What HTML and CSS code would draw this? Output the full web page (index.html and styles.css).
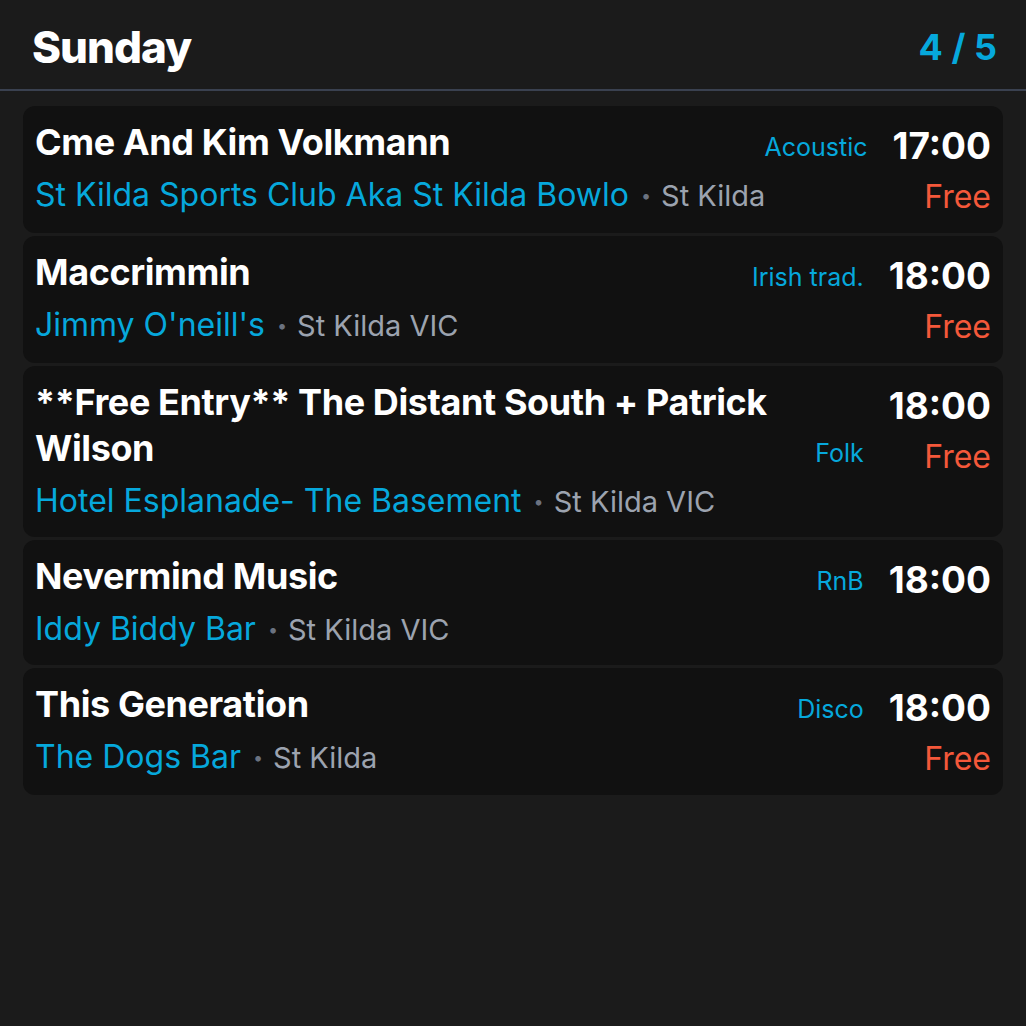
FILE: index.html
```html
<!DOCTYPE html>
<html lang="en">
<head>
<meta charset="utf-8">
<title>Sunday</title>
<link rel="stylesheet" href="styles.css">
</head>
<body>
<div class="screen">
  <header class="header">
    <h1 class="day">Sunday</h1>
    <div class="pager">4 / 5</div>
  </header>
  <main class="list">
    <article class="card">
      <div class="main">
        <div class="top">
          <div class="title">Cme And Kim Volkmann</div>
          <div class="genre">Acoustic</div>
        </div>
        <div class="venue"><span class="venue-name">St Kilda Sports Club Aka St Kilda Bowlo</span><span class="dot">•</span><span class="place">St Kilda</span></div>
      </div>
      <div class="side">
        <div class="time">17:00</div>
        <div class="price">Free</div>
      </div>
    </article>
    <article class="card">
      <div class="main">
        <div class="top">
          <div class="title">Maccrimmin</div>
          <div class="genre">Irish trad.</div>
        </div>
        <div class="venue"><span class="venue-name">Jimmy O'neill's</span><span class="dot">•</span><span class="place">St Kilda VIC</span></div>
      </div>
      <div class="side">
        <div class="time">18:00</div>
        <div class="price">Free</div>
      </div>
    </article>
    <article class="card">
      <div class="main">
        <div class="top">
          <div class="title">**Free Entry** The Distant South + Patrick Wilson</div>
          <div class="genre">Folk</div>
        </div>
        <div class="venue"><span class="venue-name">Hotel Esplanade- The Basement</span><span class="dot">•</span><span class="place">St Kilda VIC</span></div>
      </div>
      <div class="side">
        <div class="time">18:00</div>
        <div class="price">Free</div>
      </div>
    </article>
    <article class="card">
      <div class="main">
        <div class="top">
          <div class="title">Nevermind Music</div>
          <div class="genre">RnB</div>
        </div>
        <div class="venue"><span class="venue-name">Iddy Biddy Bar</span><span class="dot">•</span><span class="place">St Kilda VIC</span></div>
      </div>
      <div class="side">
        <div class="time">18:00</div>
      </div>
    </article>
    <article class="card">
      <div class="main">
        <div class="top">
          <div class="title">This Generation</div>
          <div class="genre">Disco</div>
        </div>
        <div class="venue"><span class="venue-name">The Dogs Bar</span><span class="dot">•</span><span class="place">St Kilda</span></div>
      </div>
      <div class="side">
        <div class="time">18:00</div>
        <div class="price">Free</div>
      </div>
    </article>
  </main>
</div>
</body>
</html>
```

FILE: styles.css
```css
* {
  box-sizing: border-box;
}

html,
body {
  margin: 0;
  padding: 0;
  background: #1b1b1b;
}

body {
  font-family: Inter, "Noto Sans", "Liberation Sans", sans-serif;
  color: #ffffff;
  width: 1026px;
  height: 1026px;
  overflow: hidden;
}

.screen {
  display: flex;
  flex-direction: column;
}

.header {
  height: 91px;
  display: flex;
  align-items: center;
  justify-content: space-between;
  padding: 4px 29px 0 32px;
  border-bottom: 2px solid #3a4150;
}

.day {
  margin: 0;
  font-size: 44px;
  font-weight: 800;
  letter-spacing: -1px;
  line-height: 1;
}

.pager {
  font-size: 36px;
  font-weight: 700;
  color: #06a8dc;
  line-height: 1;
}

.list {
  display: flex;
  flex-direction: column;
  gap: 3px;
  padding: 15px 23px;
}

.card {
  display: flex;
  align-items: flex-start;
  gap: 25px;
  background: #111111;
  border-radius: 12px;
  padding: 13px 12px 10px 12px;
}

.main {
  flex: 1;
  min-width: 0;
  display: flex;
  flex-direction: column;
}

.top {
  display: flex;
  align-items: flex-end;
  gap: 24px;
}

.title {
  flex: 1;
  font-size: 36px;
  font-weight: 700;
  line-height: 46px;
  letter-spacing: -0.4px;
}

.genre {
  font-size: 25px;
  color: #06a8dc;
  line-height: 36px;
  white-space: nowrap;
}

.venue {
  font-size: 32px;
  line-height: 50px;
  white-space: nowrap;
  margin-top: 5px;
}

.venue-name {
  color: #06a8dc;
}

.dot {
  color: #6b7280;
  font-size: 18px;
  margin: 0 10px 0 12px;
  vertical-align: 4px;
}

.place {
  color: #9ca3af;
  font-size: 29px;
}

.side {
  display: flex;
  flex-direction: column;
  align-items: flex-end;
}

.time {
  font-size: 37px;
  font-weight: 700;
  line-height: 48px;
  margin-top: 3px;
}

.price {
  font-size: 32px;
  line-height: 46px;
  margin: 4px 0 3px;
  color: #f4583a;
}
```
